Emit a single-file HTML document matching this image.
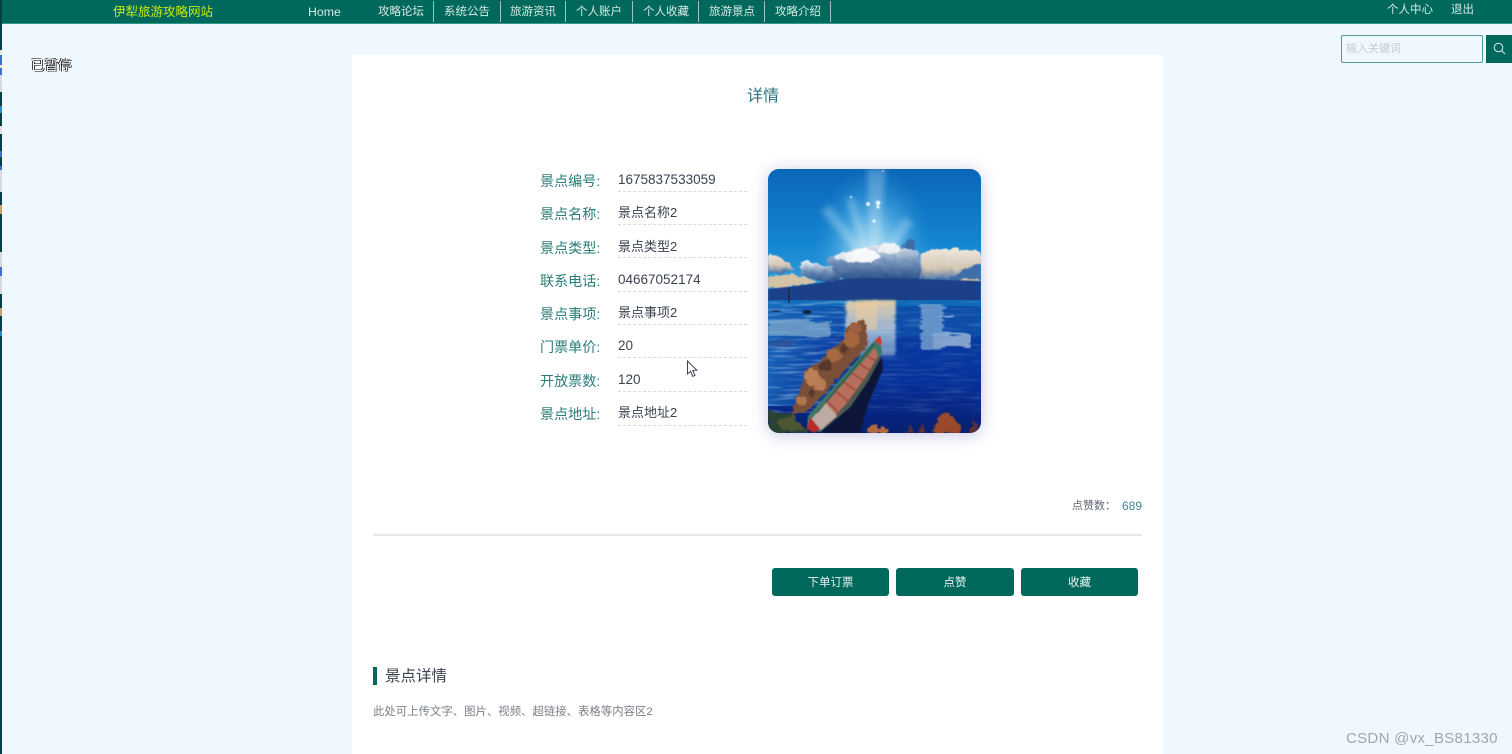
<!DOCTYPE html>
<html lang="zh">
<head>
<meta charset="utf-8">
<title>详情</title>
<style>
*{box-sizing:border-box;margin:0;padding:0}
html,body{width:1512px;height:754px;overflow:hidden;background:#f0f8ff;font-family:"Liberation Sans","Noto Sans CJK SC",sans-serif}
.a{position:absolute;white-space:nowrap}
#hd{position:absolute;left:0;top:0;width:1512px;height:24px;background:#00695c;border-bottom:1px solid #2f9a8c}
#strip{position:absolute;left:0;top:0;width:2px;height:754px;background:linear-gradient(to bottom,#073f48 0,#073f48 50px,#e8e8e8 50px,#e8e8e8 55px,#3f6fd0 55px,#3f6fd0 65px,#e8e8e8 65px,#e8e8e8 68px,#3f6fd0 68px,#3f6fd0 75px,#d8d8e0 75px,#d8d8e0 92px,#073f48 92px,#073f48 106px,#1a8fd0 106px,#1a8fd0 113px,#073f48 113px,#073f48 126px,#e0e0e0 126px,#e0e0e0 134px,#073f48 134px,#073f48 151px,#3f6fd0 151px,#3f6fd0 157px,#073f48 157px,#073f48 166px,#3f6fd0 166px,#3f6fd0 170px,#d8d8e0 170px,#d8d8e0 192px,#073f48 192px,#073f48 205px,#c8a070 205px,#c8a070 214px,#073f48 214px,#073f48 252px,#d8d8e0 252px,#d8d8e0 267px,#3f6fd0 267px,#3f6fd0 276px,#d8d8e0 276px,#d8d8e0 294px,#073f48 294px,#073f48 308px,#c8a070 308px,#c8a070 316px,#073f48 316px,#073f48 331px,#1a8fd0 331px,#1a8fd0 336px,#073f48 336px)}
.nv{position:absolute;top:0;height:22px;line-height:25px;font-size:11.5px;color:#d6e8e4;white-space:nowrap}
.sep{position:absolute;top:1px;height:21px;width:1px;background:#9cc6bf}
#main{position:absolute;left:352px;top:55px;width:811px;height:699px;background:#fff}
.lb{position:absolute;left:540px;font-size:14.1px;line-height:20px;color:#2a7d78;white-space:nowrap}
.vl{position:absolute;left:618px;font-size:13px;line-height:18px;color:#3a4250;white-space:nowrap}
.dg{font-size:13.5px}
.dl{position:absolute;left:618px;width:129px;border-top:1px dashed #d3dbe6}
.btn{position:absolute;top:568px;height:28px;width:117px;background:#00695c;border-radius:3px;color:#e8f3f0;font-size:11.5px;line-height:31px;text-align:center}
</style>
</head>
<body>
<div id="hd"></div>
<div id="strip"></div>
<div class="a" style="left:113px;top:4px;font-size:12.5px;line-height:17px;color:#c9e814">伊犁旅游攻略网站</div>
<div class="nv" style="left:308px;font-size:12.3px;line-height:24px">Home</div>
<div class="nv" style="left:378px">攻略论坛</div><div class="sep" style="left:433px"></div>
<div class="nv" style="left:444px">系统公告</div><div class="sep" style="left:500px"></div>
<div class="nv" style="left:510px">旅游资讯</div><div class="sep" style="left:565px"></div>
<div class="nv" style="left:576px">个人账户</div><div class="sep" style="left:632px"></div>
<div class="nv" style="left:643px">个人收藏</div><div class="sep" style="left:698px"></div>
<div class="nv" style="left:709px">旅游景点</div><div class="sep" style="left:764px"></div>
<div class="nv" style="left:775px">攻略介绍</div><div class="sep" style="left:830px"></div>
<div class="nv" style="left:1387px;line-height:21px">个人中心</div>
<div class="nv" style="left:1451px;line-height:21px">退出</div>

<div class="a" style="left:31px;top:57px;font-size:13.5px;line-height:18px;color:#fff;text-shadow:.7px .7px 0 #000,-.7px -.7px 0 #000">已暂停</div>

<div class="a" style="left:1341px;top:35px;width:142px;height:28px;border:1px solid #4f9c94;border-radius:2px;background:#f0f8ff;font-size:11px;line-height:27px;color:#c3cbd6;padding-left:4px">输入关键词</div>
<div class="a" style="left:1486px;top:35px;width:26px;height:28px;background:#00695c">
<svg width="26" height="28" viewBox="0 0 26 28"><circle cx="12.5" cy="12.5" r="4.3" fill="none" stroke="#dcecea" stroke-width="1"/><path d="M15.6 15.6L19 19" stroke="#dcecea" stroke-width="1" fill="none"/></svg>
</div>

<div id="main"></div>
<div class="a" style="left:747px;top:87px;font-size:16px;line-height:20px;color:#2a7480">详情</div>

<div class="lb" style="top:171px">景点编号:</div><div class="vl dg" style="top:171px">1675837533059</div><div class="dl" style="top:191px"></div>
<div class="lb" style="top:204px">景点名称:</div><div class="vl" style="top:204px">景点名称2</div><div class="dl" style="top:224px"></div>
<div class="lb" style="top:238px">景点类型:</div><div class="vl" style="top:238px">景点类型2</div><div class="dl" style="top:257px"></div>
<div class="lb" style="top:271px">联系电话:</div><div class="vl dg" style="top:271px">04667052174</div><div class="dl" style="top:291px"></div>
<div class="lb" style="top:304px">景点事项:</div><div class="vl" style="top:304px">景点事项2</div><div class="dl" style="top:324px"></div>
<div class="lb" style="top:337px">门票单价:</div><div class="vl dg" style="top:337px">20</div><div class="dl" style="top:357px"></div>
<div class="lb" style="top:371px">开放票数:</div><div class="vl dg" style="top:371px">120</div><div class="dl" style="top:391px"></div>
<div class="lb" style="top:404px">景点地址:</div><div class="vl" style="top:404px">景点地址2</div><div class="dl" style="top:425px"></div>

<svg class="a" style="left:686px;top:360px" width="12" height="18" viewBox="0 0 12 18"><path d="M1.5 1L1.5 14L4.6 11.2L6.8 16.4L9 15.4L6.8 10.4L10.8 10.2Z" fill="#fff" stroke="#3c4450" stroke-width="1"/></svg>

<div class="a" style="left:768px;top:169px;width:213px;height:264px;border-radius:11px;box-shadow:0 2px 16px rgba(70,70,170,.3)"></div>
<svg class="a" style="left:768px;top:169px;border-radius:11px" width="213" height="264" viewBox="0 0 213 264">
<defs>
<linearGradient id="sky" x1="0" y1="0" x2="0" y2="1"><stop offset="0" stop-color="#0a66b8"/><stop offset=".55" stop-color="#1384d0"/><stop offset="1" stop-color="#3aa6df"/></linearGradient>
<radialGradient id="glow" gradientUnits="userSpaceOnUse" cx="0" cy="0" r="1" gradientTransform="translate(105 92) scale(62 96)"><stop offset="0" stop-color="#d4effa" stop-opacity="1"/><stop offset=".35" stop-color="#93d2f0" stop-opacity=".8"/><stop offset=".7" stop-color="#57b2e6" stop-opacity=".35"/><stop offset="1" stop-color="#2a95d8" stop-opacity="0"/></radialGradient>
<linearGradient id="water" x1="0" y1="0" x2="0" y2="1"><stop offset="0" stop-color="#0f62b2"/><stop offset=".4" stop-color="#0a4aa8"/><stop offset=".8" stop-color="#07309a"/><stop offset="1" stop-color="#061f70"/></linearGradient>
<linearGradient id="left" x1="0" y1="0" x2="1" y2="0"><stop offset="0" stop-color="#1b6fbe" stop-opacity=".7"/><stop offset="1" stop-color="#1b6fbe" stop-opacity="0"/></linearGradient>
<linearGradient id="refl" x1="0" y1="0" x2="0" y2="1"><stop offset="0" stop-color="#f0cfa0" stop-opacity=".95"/><stop offset=".55" stop-color="#c3d4e4" stop-opacity=".75"/><stop offset="1" stop-color="#a8c4dc" stop-opacity=".55"/></linearGradient>
<linearGradient id="body" x1="0" y1="0" x2="0" y2="1"><stop offset="0" stop-color="#f4f6f8"/><stop offset=".45" stop-color="#7f9cc0"/><stop offset="1" stop-color="#234a85"/></linearGradient>
<linearGradient id="cream" x1="0" y1="0" x2="0" y2="1"><stop offset="0" stop-color="#f0e9de"/><stop offset=".6" stop-color="#d5c7b4"/><stop offset="1" stop-color="#3f6ca5"/></linearGradient>
<filter id="b1"><feGaussianBlur stdDeviation="1"/></filter>
<filter id="b3"><feGaussianBlur stdDeviation="3"/></filter>
<filter id="b05"><feGaussianBlur stdDeviation=".5"/></filter>
<filter id="cl" x="-5%" y="-5%" width="110%" height="110%"><feTurbulence type="fractalNoise" baseFrequency=".14" numOctaves="3" seed="4" result="n"/><feDisplacementMap in="SourceGraphic" in2="n" scale="7" xChannelSelector="R" yChannelSelector="G"/><feGaussianBlur stdDeviation=".45"/></filter>
<filter id="rk" x="-5%" y="-5%" width="110%" height="110%"><feTurbulence type="fractalNoise" baseFrequency=".22" numOctaves="2" seed="9" result="n"/><feDisplacementMap in="SourceGraphic" in2="n" scale="6" xChannelSelector="R" yChannelSelector="G"/><feGaussianBlur stdDeviation=".4"/></filter>
<filter id="rip" x="0" y="0" width="100%" height="100%"><feTurbulence type="fractalNoise" baseFrequency=".03 .42" numOctaves="2" seed="7" result="n"/><feDisplacementMap in="SourceGraphic" in2="n" scale="10" xChannelSelector="R" yChannelSelector="G"/><feGaussianBlur stdDeviation=".5"/></filter>
<filter id="tex" x="0" y="0" width="100%" height="100%"><feTurbulence type="fractalNoise" baseFrequency=".03 .4" numOctaves="2" seed="3"/><feColorMatrix values="0 0 0 0 .55  0 0 0 0 .75  0 0 0 0 .95  0 0 0 3.2 -1.55"/><feGaussianBlur stdDeviation=".4"/></filter>
</defs>
<rect width="213" height="264" fill="url(#water)"/>
<rect width="213" height="132" fill="url(#sky)"/>
<rect width="213" height="132" fill="url(#glow)"/>
<g filter="url(#b3)" fill="#d5effb" opacity=".3">
<path d="M103 92L99 0L118 0L110 92Z"/><path d="M98 95L52 42L62 36L103 90Z"/><path d="M110 90L136 48L146 54L114 95Z"/><path d="M98 92L78 30L86 28L103 90Z"/>
</g>
<g filter="url(#b05)" fill="#e8f5fc">
<circle cx="100" cy="35" r="2"/><circle cx="110" cy="34" r="2.4"/><circle cx="110" cy="38" r="1.6"/><circle cx="106" cy="52" r="1.6"/><circle cx="83" cy="28" r="1"/><circle cx="115" cy="2" r=".8"/>
</g>
<!-- clouds -->
<g filter="url(#cl)">
<path d="M132 86L137 74C139 69 146 68 147 73C146 82 144 90 138 96Z" fill="#3c6eaa"/>
<path d="M0 85C10 88 22 93 27 101C18 105 6 104 0 103Z" fill="url(#cream)"/>
<path d="M0 108C14 105 34 104 49 113C38 116 12 120 0 121Z" fill="#d5c3a8"/>
<path d="M31 92C46 93 60 96 75 104L72 113C58 113 42 112 33 104Z" fill="url(#body)"/>
<path d="M58 92C64 84 74 88 80 81C86 76 94 82 100 78C108 76 116 72 126 75C132 77 136 82 151 82L153 110C130 112 94 112 76 110C68 104 62 98 58 92Z" fill="url(#body)"/>
<ellipse cx="94" cy="87" rx="18" ry="7" fill="#fbfcfd" opacity=".95"/>
<ellipse cx="122" cy="80" rx="12" ry="5" fill="#f2f4f6" opacity=".9"/>
<ellipse cx="76" cy="88" rx="9" ry="4" fill="#eef2f5" opacity=".85"/>
<path d="M153 84C164 81 176 79 186 79C196 81 206 82 213 82V112L152 112Z" fill="url(#cream)"/>
<path d="M176 114C186 104 202 98 213 94V116Z" fill="#3f6ea6"/>
<path d="M193 110L213 110V115H196Z" fill="#d8c8ac"/>
</g>
<path d="M0 120C30 117 52 114 76 110C110 108 150 110 213 112V132H0Z" fill="#1a4187" filter="url(#b05)"/>
<rect y="131" width="213" height="6" fill="#0e68b6"/>
<rect y="137" width="213" height="30" fill="#0f5cb0" opacity=".5"/>
<rect x="0" y="132" width="80" height="105" fill="url(#left)"/>
<rect x="0" y="132" width="85" height="112" filter="url(#tex)" opacity=".5"/>
<rect x="85" y="132" width="128" height="112" filter="url(#tex)" opacity=".16"/>
<!-- reflections -->
<g filter="url(#b1)"><rect x="77" y="131" width="51" height="56" fill="url(#refl)" filter="url(#rip)"/></g>
<rect x="88" y="131" width="21" height="30" fill="#f0cf9c" opacity=".55" filter="url(#b1)"/>
<g filter="url(#rip)" opacity=".75">
<rect x="153" y="135" width="22" height="46" fill="#7fa9d3"/>
<rect x="165" y="165" width="38" height="14" fill="#a9c3dc"/>
<rect x="172" y="146" width="14" height="4" fill="#c9d8e4"/>
<rect x="0" y="151" width="62" height="16" fill="#7fa8cc"/>
<rect x="0" y="172" width="26" height="6" fill="#2b4f92"/>
</g>
<path d="M21 120V134" stroke="#1b2a44" stroke-width="1.6"/>
<ellipse cx="39" cy="143" rx="4.5" ry="2" fill="#14233e"/>
<ellipse cx="8" cy="142" rx="5" ry=".8" fill="#1a3560"/>
<!-- rocks -->
<g filter="url(#rk)">
<path d="M97 151L80 156L76 170L62 181L52 192L38 201L33 218L23 246L42 240L100 176Z" fill="#7c4f38"/>
<circle cx="44" cy="208" r="8" fill="#bb8057"/><circle cx="58" cy="197" r="6" fill="#54382c"/><circle cx="66" cy="186" r="7" fill="#a66a42"/><circle cx="84" cy="170" r="8" fill="#a5663d"/><circle cx="87" cy="159" r="6" fill="#9c6040"/><circle cx="34" cy="232" r="5" fill="#b0764c"/><circle cx="52" cy="216" r="6" fill="#b67c52"/><circle cx="76" cy="180" r="4" fill="#5a3828"/><circle cx="44" cy="224" r="3" fill="#54382c"/>
<path d="M0 241C8 242 18 246 24 244L40 264H0Z" fill="#2a4330"/>
<path d="M10 252L26 246L38 262H14Z" fill="#4e5632"/>
</g>
<!-- boat -->
<g filter="url(#b05)">
<path d="M52 264L82 238L100 212L113 187L115 200L100 235L92 264Z" fill="#0a1638"/>
<path d="M39 259L40 247L106 172L112 167L114 184L100 212L82 238L52 263Z" fill="#3d7868"/>
<path d="M44 250L107 179L110 187L97 209L78 235L58 256Z" fill="#b86e5c"/>
<path d="M52 263L58 256L78 235L97 209L110 187L113 188L100 212L82 238Z" fill="#4d5a50"/>
<path d="M43 251L57 233L69 247L53 261Z" fill="#bdaaa2"/>
<path d="M58 231L72 245M66 221L81 233M74 212L89 222M82 203L96 212M90 194L103 202M97 186L108 192" stroke="#98483c" stroke-width="1.5"/>
<path d="M39 260L42 248L52 260L46 264Z" fill="#b52c26"/>
<path d="M107 171L112 167L114 173L112 177Z" fill="#cf3d24"/>
<path d="M49 244L106 175" stroke="#244a40" stroke-width="1"/>
</g>
<!-- bottom plants -->
<g filter="url(#rk)">
<path d="M100 264C101 254 106 252 110 258C116 258 120 260 122 264Z" fill="#b46a3c"/>
<path d="M165 264C168 252 172 244 178 243C186 246 192 254 193 264Z" fill="#9a4a2c"/>
<path d="M150 264L154 254L158 264ZM202 264L206 248L212 264ZM138 264L142 256L146 264Z" fill="#5a3236"/>
</g>
</svg>

<div class="a" style="left:1072px;top:498px;font-size:11px;line-height:16px;color:#5f6670">点赞数：</div>
<div class="a" style="left:1122px;top:498px;font-size:12px;line-height:16px;color:#3f8790">689</div>
<div class="a" style="left:373px;top:534px;width:769px;height:2px;background:#e6e8ea"></div>

<div class="btn" style="left:772px">下单订票</div>
<div class="btn" style="left:896px;width:118px">点赞</div>
<div class="btn" style="left:1021px">收藏</div>

<div class="a" style="left:373px;top:667px;width:4px;height:18px;background:#00695c"></div>
<div class="a" style="left:385px;top:667px;font-size:15.5px;line-height:20px;color:#3a4250">景点详情</div>
<div class="a" style="left:373px;top:704px;font-size:11.4px;line-height:16px;color:#7b8088">此处可上传文字、图片、视频、超链接、表格等内容区2</div>

<div class="a" style="left:1346px;top:730px;font-size:15px;line-height:18px;color:#a2a6aa;letter-spacing:.3px">CSDN @vx_BS81330</div>
</body>
</html>
